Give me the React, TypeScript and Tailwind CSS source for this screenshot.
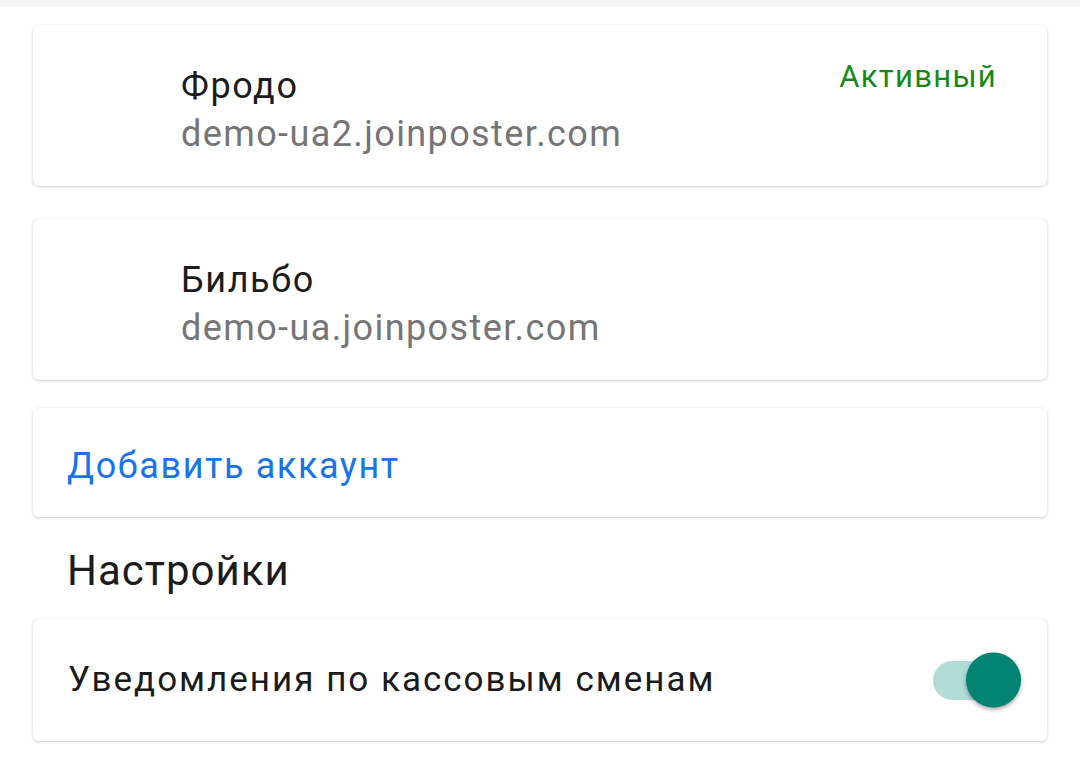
import React from "react"

const card = "bg-white rounded-[6px] shadow-[0_1px_3px_rgba(0,0,0,0.2),0_0_1px_rgba(0,0,0,0.08)]"

function Account({ name, host, active }: { name: string; host: string; active?: boolean }) {
  return (
    <div className={`${card} flex items-start justify-between pl-[148px] pr-[50px] pt-[34px] pb-[30px]`}>
      <div className="mt-[5px]">
        <div className="text-[36px] leading-[44px] tracking-[1.6px] text-[#1c1c1c]">{name}</div>
        <div className="mt-[4px] text-[36px] leading-[44px] tracking-[1.4px] text-[#757575]">{host}</div>
      </div>
      {active && <div className="text-[31px] leading-[36px] tracking-[1.3px] text-[#168a16]">Активный</div>}
    </div>
  )
}

export default function App() {
  return (
    <div className="w-[1080px] h-[767px] bg-white overflow-hidden" style={{ fontFamily: "Roboto, 'Noto Sans', sans-serif" }}>
      <div className="h-[7px] bg-[#f5f5f5]" />
      <div className="px-[33px] pt-[18px]">
        <Account name="Фродо" host="demo-ua2.joinposter.com" active />
        <div className="mt-[33px]">
          <Account name="Бильбо" host="demo-ua.joinposter.com" />
        </div>

        <div className={`${card} mt-[28px] pl-[34px] pt-[36px] pb-[29px]`}>
          <div className="text-[36px] leading-[44px] tracking-[1.6px] text-[#1a73e8]">Добавить аккаунт</div>
        </div>

        <div className="mt-[29px] pl-[34px] text-[42px] leading-[50px] tracking-[1px] text-[#1c1c1c]">Настройки</div>

        <div className={`${card} mt-[23px] flex items-center justify-between pl-[35px] pr-[26px] h-[122px]`}>
          <div className="text-[35px] leading-[40px] tracking-[2px] text-[#1a1a1a]">Уведомления по кассовым сменам</div>
          {/* switch, on */}
          <div className="relative w-[88px] h-[39px] rounded-full bg-[#b0dbd7]">
            <div className="absolute right-0 top-1/2 -translate-y-1/2 w-[55px] h-[55px] rounded-full bg-[#028373] shadow-[0_2px_4px_rgba(0,0,0,0.35)]" />
          </div>
        </div>
      </div>
    </div>
  )
}
